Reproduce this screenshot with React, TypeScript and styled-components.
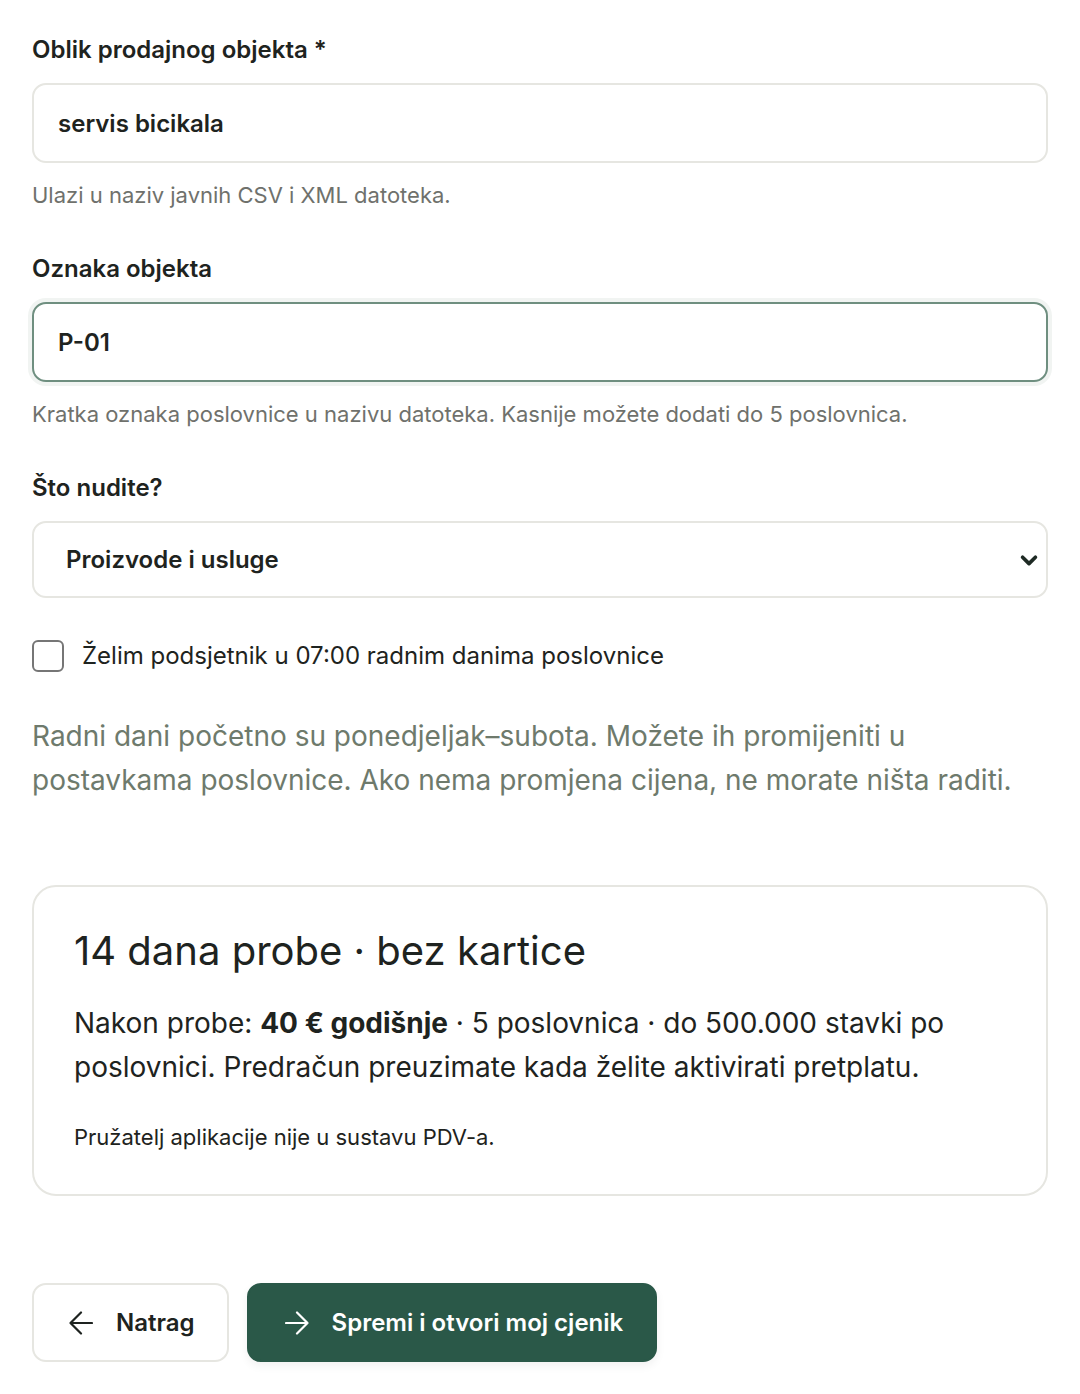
import React, { useState } from "react";
import styled, { createGlobalStyle } from "styled-components";

const GlobalStyle = createGlobalStyle`
  body {
    margin: 0;
    background: #ffffff;
    font-family: Inter, "Noto Sans", sans-serif;
    color: #1e2320;
  }
  * { box-sizing: border-box; }
`;

const Page = styled.div`
  padding: 33px 32px 32px;
  display: flex;
  flex-direction: column;
`;

const Field = styled.div`
  display: flex;
  flex-direction: column;
  margin-bottom: 42px;
`;

const Label = styled.label`
  font-size: 24px;
  line-height: 33px;
  font-weight: 600;
  color: #1e2320;
  margin-bottom: 17px;
`;

const TextInput = styled.input<{ $focused?: boolean }>`
  height: 80px;
  width: 100%;
  padding: 0 24px;
  border: 2px solid ${({ $focused }) => ($focused ? "#6f8f80" : "#e6e6e1")};
  border-radius: 14px;
  box-shadow: ${({ $focused }) => ($focused ? "0 0 0 4px #f1f4f2" : "none")};
  font-family: inherit;
  font-size: 24px;
  font-weight: 600;
  color: #1e2320;
  background: #ffffff;
  outline: none;
`;

const Hint = styled.div`
  margin-top: 17px;
  font-size: 22px;
  line-height: 30px;
  color: #6f716c;
`;

const SelectWrap = styled.div`
  position: relative;
`;

const Select = styled.select`
  appearance: none;
  width: 100%;
  height: 77px;
  padding: 0 60px 0 32px;
  border: 2px solid #e6e6e1;
  border-radius: 14px;
  background: #ffffff;
  font-family: inherit;
  font-size: 24px;
  font-weight: 600;
  color: #1e2320;
  outline: none;
`;

const Chevron = styled.svg`
  position: absolute;
  right: 8px;
  top: 50%;
  transform: translateY(-50%);
  pointer-events: none;
`;

const CheckRow = styled.label`
  display: flex;
  align-items: center;
  gap: 18px;
  margin-top: -2px;
  font-size: 24px;
  line-height: 36px;
  color: #1e2320;
  cursor: pointer;
`;

const Box = styled.span<{ $checked: boolean }>`
  width: 32px;
  height: 32px;
  flex: none;
  border: 2px solid #767676;
  border-radius: 6px;
  background: ${({ $checked }) => ($checked ? "#2a5848" : "#ffffff")};
`;

const Note = styled.p`
  margin: 40px 0 0;
  font-size: 28px;
  line-height: 44px;
  color: #6e7a6c;
`;

const Card = styled.section`
  margin-top: 83px;
  border: 2px solid #e6e6e1;
  border-radius: 24px;
  padding: 39px 40px 42px;
`;

const CardTitle = styled.h2`
  margin: 0;
  font-size: 40px;
  line-height: 50px;
  font-weight: 400;
  color: #1e2320;
`;

const CardBody = styled.p`
  margin: 25px 0 0;
  font-size: 28px;
  line-height: 44px;
  color: #1e2320;
  b { font-weight: 700; }
`;

const CardSmall = styled.p`
  margin: 33px 0 0;
  font-size: 22px;
  line-height: 30px;
  color: #1e2320;
`;

const Actions = styled.div`
  display: flex;
  gap: 18px;
  margin-top: 87px;
`;

const Button = styled.button<{ $primary?: boolean }>`
  height: 79px;
  display: flex;
  align-items: center;
  gap: 23px;
  padding: 0 32px 0 ${({ $primary }) => ($primary ? "36px" : "35px")};
  border: 2px solid ${({ $primary }) => ($primary ? "#2a5848" : "#e6e6e1")};
  border-radius: 14px;
  background: ${({ $primary }) => ($primary ? "#2a5848" : "#ffffff")};
  color: ${({ $primary }) => ($primary ? "#ffffff" : "#1e2320")};
  box-shadow: ${({ $primary }) => ($primary ? "0 4px 10px rgba(0,0,0,0.06)" : "none")};
  font-family: inherit;
  font-size: 24px;
  font-weight: 600;
  cursor: pointer;
`;

const Arrow = ({ dir }: { dir: "left" | "right" }) => (
  <svg width="24" height="24" viewBox="0 0 24 24" fill="none" stroke="currentColor" strokeWidth="2.2" strokeLinecap="round" strokeLinejoin="round">
    {dir === "left" ? (
      <path d="M23 12H1.5M12 1.5L1.5 12L12 22.5" />
    ) : (
      <path d="M1 12h21.5M12 1.5L22.5 12L12 22.5" />
    )}
  </svg>
);

export default function App() {
  const [checked, setChecked] = useState(false);
  return (
    <Page>
      <GlobalStyle />
      <Field>
        <Label>Oblik prodajnog objekta *</Label>
        <TextInput defaultValue="servis bicikala" />
        <Hint>Ulazi u naziv javnih CSV i XML datoteka.</Hint>
      </Field>
      <Field>
        <Label>Oznaka objekta</Label>
        <TextInput $focused defaultValue="P-01" />
        <Hint>Kratka oznaka poslovnice u nazivu datoteka. Kasnije možete dodati do 5 poslovnica.</Hint>
      </Field>
      <Field>
        <Label>Što nudite?</Label>
        <SelectWrap>
          <Select defaultValue="oboje">
            <option value="oboje">Proizvode i usluge</option>
            <option value="proizvodi">Proizvode</option>
            <option value="usluge">Usluge</option>
          </Select>
          <Chevron width="22" height="22" viewBox="0 0 24 24" fill="none" stroke="#1e2a24" strokeWidth="4" strokeLinecap="round" strokeLinejoin="round">
            <path d="M5 9l7 7 7-7" />
          </Chevron>
        </SelectWrap>
      </Field>
      <CheckRow onClick={() => setChecked(!checked)}>
        <Box $checked={checked} />
        Želim podsjetnik u 07:00 radnim danima poslovnice
      </CheckRow>
      <Note>
        Radni dani početno su ponedjeljak–subota. Možete ih promijeniti u postavkama poslovnice. Ako nema promjena cijena, ne morate ništa raditi.
      </Note>
      <Card>
        <CardTitle>14 dana probe · bez kartice</CardTitle>
        <CardBody>
          Nakon probe: <b>40 € godišnje</b> · 5 poslovnica · do 500.000 stavki po poslovnici. Predračun preuzimate kada želite aktivirati pretplatu.
        </CardBody>
        <CardSmall>Pružatelj aplikacije nije u sustavu PDV-a.</CardSmall>
      </Card>
      <Actions>
        <Button>
          <Arrow dir="left" />
          Natrag
        </Button>
        <Button $primary>
          <Arrow dir="right" />
          Spremi i otvori moj cjenik
        </Button>
      </Actions>
    </Page>
  );
}
